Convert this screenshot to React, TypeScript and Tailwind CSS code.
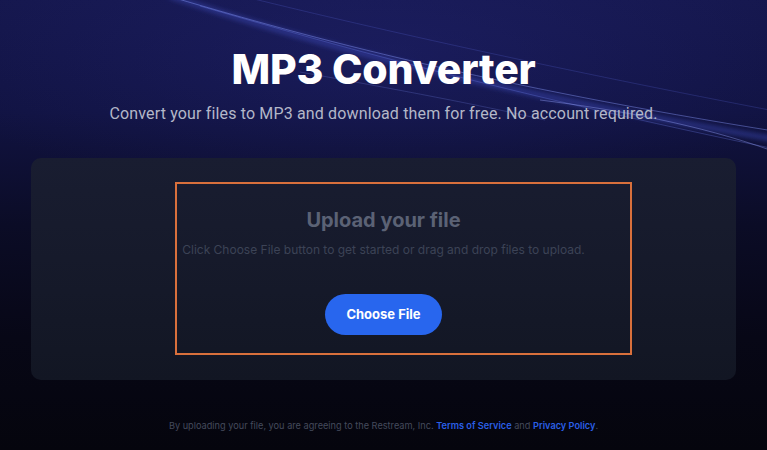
import React from "react";

export default function App() {
  return (
    <div className="relative w-full h-[450px] overflow-hidden bg-[linear-gradient(180deg,#15174d_0%,#111342_25%,#0b0c26_50%,#070716_75%,#05050d_100%)] font-['Inter',sans-serif]">
      {/* light streaks */}
      <svg
        className="absolute inset-0 pointer-events-none"
        width="767"
        height="450"
        viewBox="0 0 767 450"
      >
        <defs>
          <filter id="blur1" x="-20%" y="-20%" width="140%" height="140%">
            <feGaussianBlur stdDeviation="2.5" />
          </filter>
          <filter id="blur2" x="-20%" y="-20%" width="140%" height="140%">
            <feGaussianBlur stdDeviation="0.7" />
          </filter>
          <radialGradient id="glow" cx="0.5" cy="0.2" r="0.6">
            <stop offset="0%" stopColor="#2a2c8a" stopOpacity="0.3" />
            <stop offset="100%" stopColor="#2a2c8a" stopOpacity="0" />
          </radialGradient>
        </defs>
        <rect x="0" y="0" width="767" height="260" fill="url(#glow)" />
        <path d="M170 -4 C 300 40, 480 90, 780 140" stroke="#4456d0" strokeOpacity="0.45" strokeWidth="5" fill="none" filter="url(#blur1)" />
        <path d="M175 -2 C 310 38, 490 86, 780 132" stroke="#8494f5" strokeOpacity="0.45" strokeWidth="1" fill="none" filter="url(#blur2)" />
        <path d="M200 6 C 330 44, 500 92, 780 150" stroke="#6f82f0" strokeOpacity="0.3" strokeWidth="1" fill="none" filter="url(#blur2)" />
        <path d="M250 -2 C 380 30, 560 70, 780 112" stroke="#5e6fe6" strokeOpacity="0.22" strokeWidth="1" fill="none" filter="url(#blur2)" />
        <path d="M300 72 C 400 90, 480 105, 545 120" stroke="#7b8af0" strokeOpacity="0.3" strokeWidth="0.8" fill="none" filter="url(#blur2)" />
        <path d="M540 100 C 620 110, 700 125, 770 150" stroke="#9aa8ff" strokeOpacity="0.4" strokeWidth="1" fill="none" filter="url(#blur2)" />
      </svg>

      <div className="relative flex flex-col items-center">
        <h1 className="mt-[47px] text-[41px] leading-[44px] font-extrabold text-white tracking-[-0.2px] font-['Inter',sans-serif]">
          MP3 Converter
        </h1>
        <p className="mt-[13px] text-[16px] leading-[20px] tracking-[0.15px] text-[#b3b7c8] font-['Roboto',sans-serif]">
          Convert your files to MP3 and download them for free. No account required.
        </p>

        <div className="relative mt-[34px] w-[705px] h-[222px] rounded-[10px] bg-[linear-gradient(180deg,#191d31_0%,#151929_60%,#121623_100%)] flex flex-col items-center">
          <div className="absolute left-[144px] top-[24px] w-[457px] h-[173px] border-2 border-[#d9703c] pointer-events-none" />
          <h2 className="mt-[50px] text-[20px] leading-[24px] font-bold text-[#5b6275] font-['Inter',sans-serif]">
            Upload your file
          </h2>
          <p className="mt-[10px] text-[12px] leading-[16px] text-[#3c4356] font-['Inter',sans-serif]">
            Click Choose File button to get started or drag and drop files to upload.
          </p>
          <button className="mt-[36px] w-[117px] h-[41px] rounded-[21px] bg-[#2866ee] text-white text-[13px] font-bold font-['Inter',sans-serif]">
            Choose File
          </button>
        </div>

        <p className="mt-[40px] text-[9.2px] leading-[12px] text-[#444a5c] font-['Inter',sans-serif]">
          By uploading your file, you are agreeing to the Restream, Inc.{" "}
          <span className="text-[#2a5fe6] font-semibold">Terms of Service</span> and{" "}
          <span className="text-[#2a5fe6] font-semibold">Privacy Policy</span>.
        </p>
      </div>
    </div>
  );
}
